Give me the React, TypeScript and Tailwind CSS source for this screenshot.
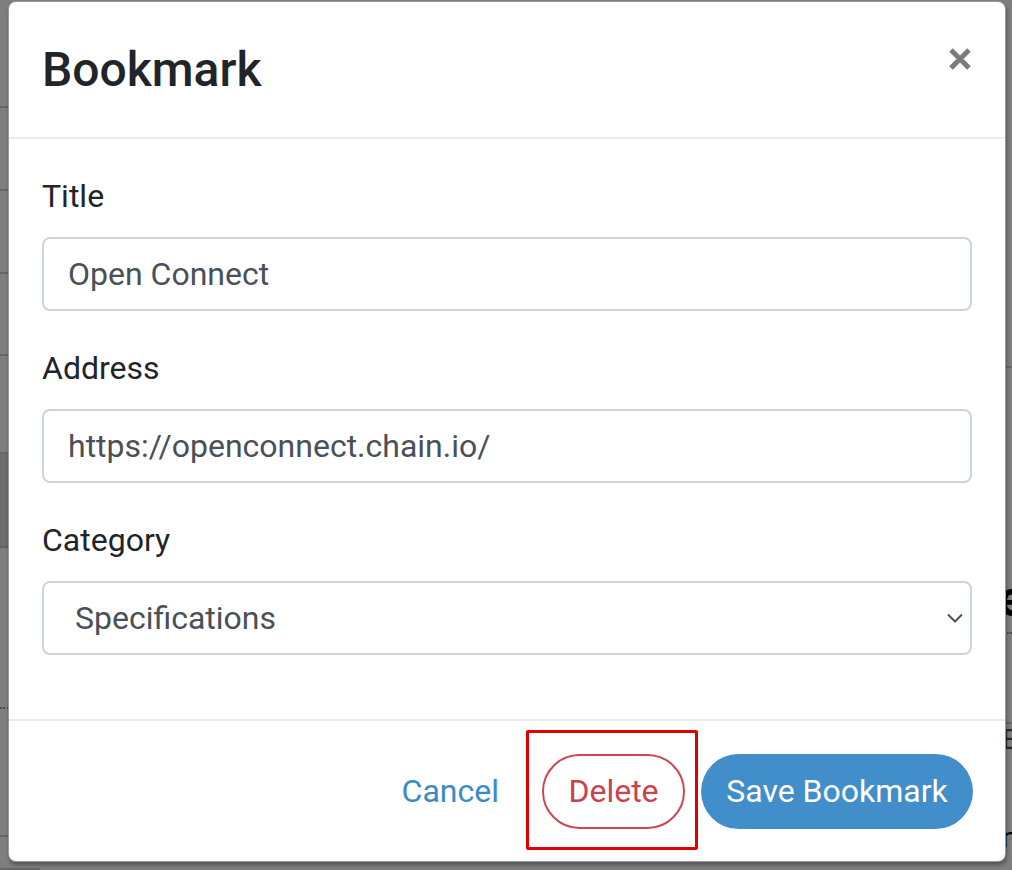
import React from "react";

const leftRows = [108, 83, 83, 82, 98, 94, 161, 128, 33];

function BackgroundPage() {
  return (
    <div className="flex h-[870px] w-full justify-between overflow-hidden bg-white">
      {/* left strip of the page behind the dialog */}
      <div className="flex w-[40px] flex-col">
        {leftRows.map((h, i) => (
          <div
            key={i}
            className={
              i === 5
                ? "shrink-0 border-b-2 border-[#c8c8c8] bg-[#dcdcdc]"
                : i === 6
                ? "shrink-0 border-b-2 border-dotted border-[#9a9a9a]"
                : "shrink-0 border-b-2 border-[#d0d0d0]"
            }
            style={{ height: h }}
          />
        ))}
      </div>
      {/* right strip */}
      <div className="flex w-[40px] flex-col items-end">
        <div className="h-[368px] w-full shrink-0 border-b-2 border-[#d0d0d0]" />
        <div className="flex h-[266px] w-full shrink-0 items-end border-b-2 border-dotted border-[#9a9a9a] pb-[8px]">
          <span className="ml-[26px] font-['Roboto'] text-[50px] font-bold leading-none text-black">e</span>
        </div>
        <div className="h-[90px] w-full shrink-0 border-b-2 border-[#d0d0d0]" />
        <div className="flex h-[100px] w-full shrink-0 items-start pt-[2px]">
          <span className="ml-[30px] font-['Roboto'] text-[28px] leading-none text-[#555]">E</span>
        </div>
        <div className="w-full pl-[30px] font-['Roboto'] text-[28px] leading-none text-black">n</div>
      </div>
    </div>
  );
}

function Field({ label, value, select }: { label: string; value: string; select?: boolean }) {
  return (
    <div className="mb-[36px]">
      <div className="mb-[20px] text-[32px] leading-[42px] text-[#212529]">{label}</div>
      <div className="flex h-[74px] items-center justify-between rounded-[8px] border-2 border-[#ced4da] bg-white">
        <span className={select ? "pl-[31px] text-[32px] text-[#495057]" : "pl-[24px] text-[32px] text-[#495057]"}>
          {value}
        </span>
        {select && (
          <svg width="18" height="12" viewBox="0 0 18 12" className="mr-[6px] text-[#4d5358]">
            <path d="M2 2.5 L9 9.5 L16 2.5" fill="none" stroke="currentColor" strokeWidth="2" />
          </svg>
        )}
      </div>
    </div>
  );
}

export default function App() {
  return (
    <div className="relative h-[870px] w-[1012px] overflow-hidden font-['Roboto',sans-serif]">
      <BackgroundPage />

      {/* backdrop + dialog */}
      <div className="absolute inset-0 bg-black/50 pl-[8px] pt-[1px]">
        <div className="relative flex h-[861px] w-[998px] flex-col rounded-[8px] border border-black/40 bg-white shadow-[1px_3px_4px_rgba(0,0,0,0.35)]">
          {/* Header */}
          <div className="flex h-[137px] shrink-0 items-start justify-between border-b-2 border-[#e9ecef] pl-[33px] pr-[33px]">
            <h4 className="mt-[39px] text-[48px] font-medium leading-[58px] text-[#212529]">Bookmark</h4>
            <button className="mt-[45px] text-[#7b7b7b]" aria-label="Close">
              <svg width="24" height="24" viewBox="0 0 24 24">
                <path d="M3 3 L21 21 M21 3 L3 21" stroke="currentColor" strokeWidth="5" />
              </svg>
            </button>
          </div>

          {/* Body */}
          <div className="flex-1 px-[33px] pt-[36px]">
            <Field label="Title" value="Open Connect" />
            <Field label="Address" value="https://openconnect.chain.io/" />
            <Field label="Category" value="Specifications" select />
          </div>

          {/* Footer */}
          <div className="flex h-[142px] shrink-0 items-center justify-end gap-4 border-t-2 border-[#e9ecef] pr-[32px]">
            <button className="h-[75px] px-[27px] text-[32px] text-[#3a8ac6]">Cancel</button>
            <button className="h-[75px] w-[143px] rounded-full border-2 border-[#cf4450] text-[32px] text-[#c9434d]">
              Delete
            </button>
            <button className="h-[75px] w-[272px] rounded-full bg-[#418ecb] text-[32px] text-white">
              Save Bookmark
            </button>
          </div>

          {/* annotation box */}
          <div className="absolute left-[517px] top-[728px] h-[120px] w-[172px] rounded-[2px] border-[3px] border-[#e00000]" />
        </div>
      </div>
    </div>
  );
}
